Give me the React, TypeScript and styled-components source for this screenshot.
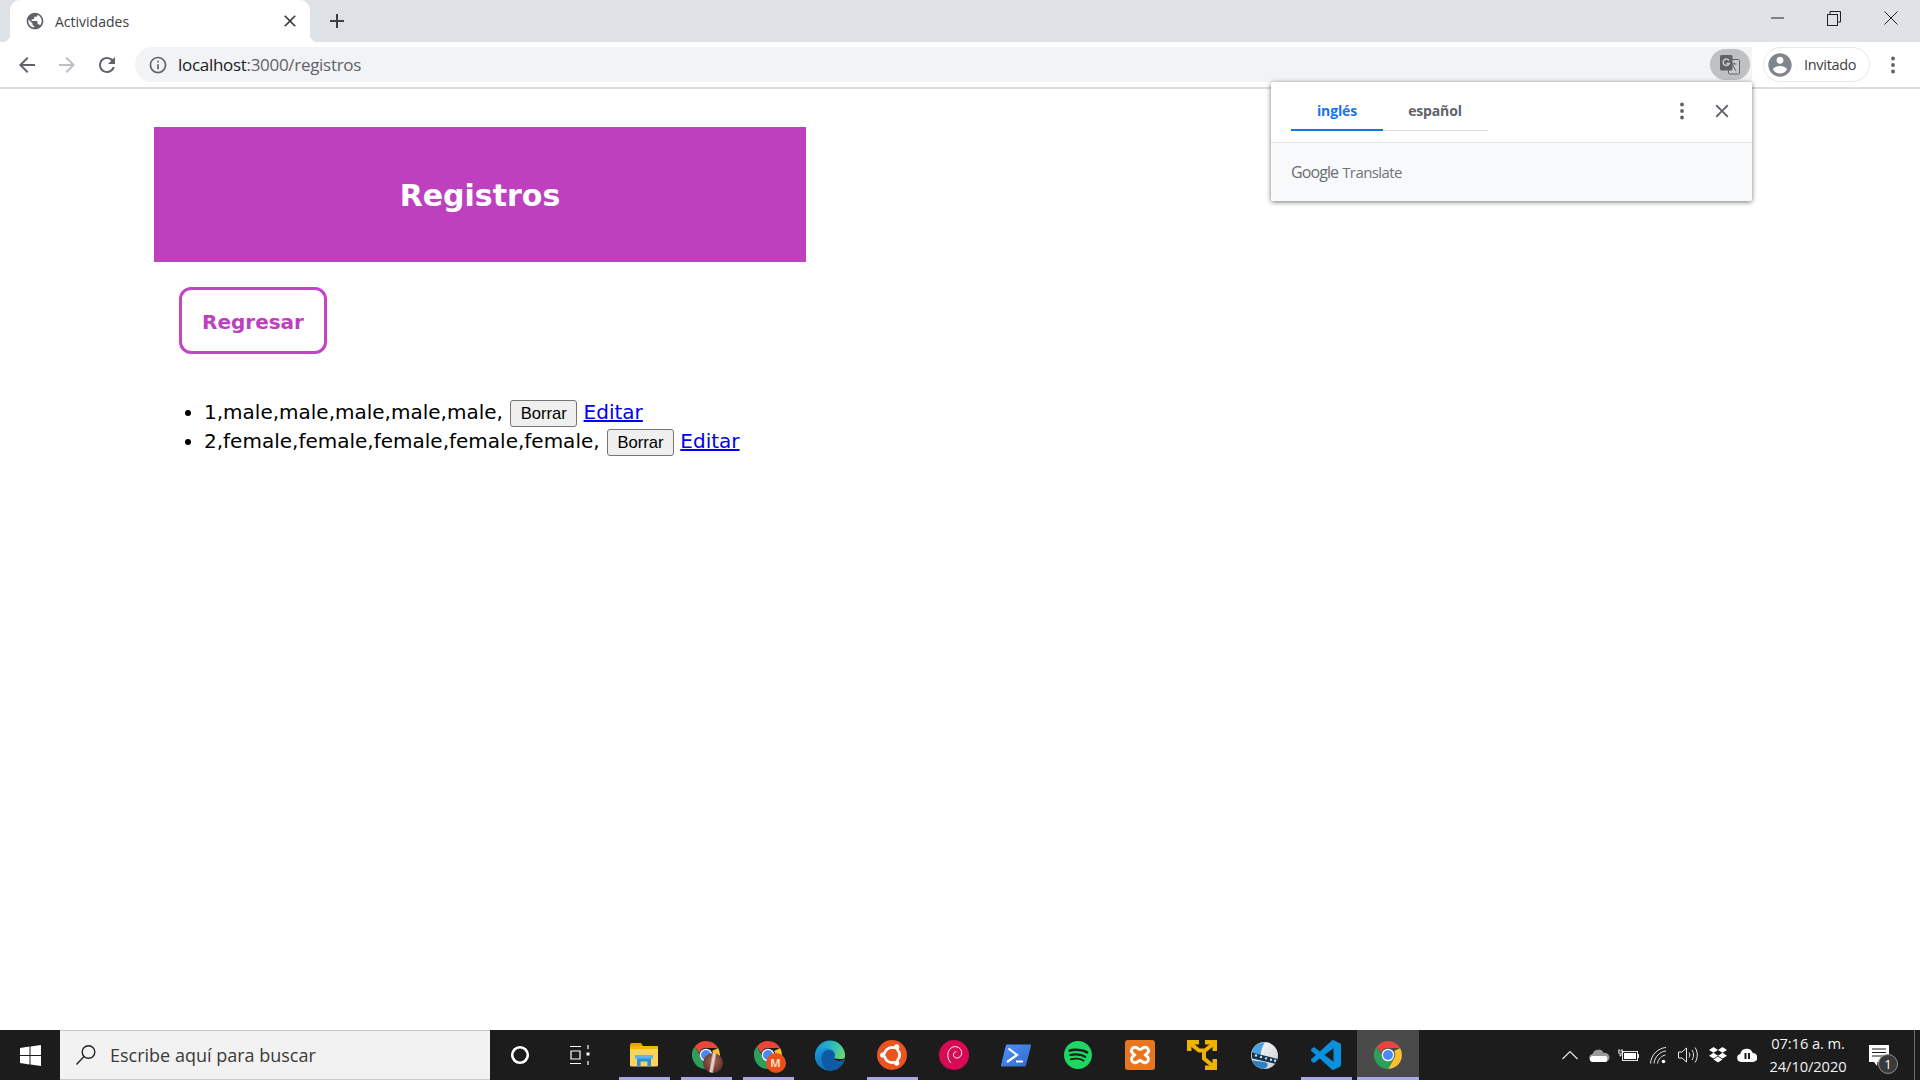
import React from "react";
import styled, { createGlobalStyle } from "styled-components";

const Global = createGlobalStyle`
  html, body { margin: 0; padding: 0; height: 100%; background: #fff; overflow: hidden; }
  #root { height: 100%; }
`;

const UI = `"Open Sans", "Noto Sans", sans-serif`;

const Screen = styled.div`
  position: relative;
  width: 1920px;
  height: 1080px;
  display: flex;
  flex-direction: column;
  font-family: "DejaVu Sans", sans-serif;
  overflow: hidden;
`;

/* ---------- browser chrome ---------- */
const TabStrip = styled.div`
  height: 42px;
  flex: none;
  background: #dee1e6;
  display: flex;
  padding-left: 10px;
`;
const Tab = styled.div`
  position: relative;
  width: 300px;
  height: 42px;
  box-sizing: border-box;
  background: #fff;
  border-radius: 10px 10px 0 0;
  display: flex;
  align-items: center;
  padding: 0 10px 0 15px;
  &::before, &::after {
    content: "";
    position: absolute;
    bottom: 0;
    width: 8px;
    height: 8px;
  }
  &::before { left: -8px; background: radial-gradient(circle at 0 0, #dee1e6 8px, #fff 8.5px); }
  &::after { right: -8px; background: radial-gradient(circle at 100% 0, #dee1e6 8px, #fff 8.5px); }
`;
const TabTitle = styled.span`
  flex: 1;
  margin-left: 10px;
  font: 400 14px ${UI};
  color: #3c4043;
  letter-spacing: 0;
`;
const NewTab = styled.div`
  width: 30px;
  margin-left: 12px;
  display: flex;
  align-items: center;
  justify-content: center;
`;
const WindowControls = styled.div`
  margin-left: auto;
  margin-right: 1px;
  display: flex;
  height: 36px;
`;
const WindowButton = styled.div`
  width: 56.5px;
  display: flex;
  align-items: center;
  justify-content: center;
`;
const Toolbar = styled.div`
  height: 47px;
  flex: none;
  box-sizing: border-box;
  background: #fff;
  border-bottom: 2px solid #dadce0;
  display: flex;
  align-items: flex-start;
  padding: 5px 0 0 7px;
`;
const NavButton = styled.div`
  width: 40px;
  height: 35px;
  display: flex;
  align-items: center;
  justify-content: center;
`;
const Omnibox = styled.div`
  flex: none;
  width: 1617px;
  height: 35px;
  margin-left: 8px;
  border-radius: 17.5px 0 0 17.5px;
  background: #f1f3f4;
  display: flex;
  align-items: center;
  padding-left: 13px;
  box-sizing: border-box;
`;
const Url = styled.div`
  margin-left: 10px;
  font: 400 17px ${UI};
  letter-spacing: -0.3px;
  color: #5f6368;
  b { font-weight: 400; color: #202124; }
`;
const TranslateChip = styled.div`
  margin-left: auto;
  margin-right: 2px;
  width: 40px;
  height: 31px;
  border-radius: 16px;
  background: #bfc0c1;
  display: flex;
  align-items: center;
  justify-content: center;
  flex: none;
`;
const ProfilePill = styled.div`
  margin-left: 11px;
  width: 107px;
  height: 35px;
  box-sizing: border-box;
  border: 1px solid #e6e7e9;
  border-radius: 18px;
  display: flex;
  align-items: center;
  padding-left: 2px;
  font: 400 14.5px ${UI};
  letter-spacing: -0.3px;
  color: #3c4043;
  span { margin-left: 10px; }
`;
const MenuButton = styled.div`
  width: 46px;
  height: 35px;
  display: flex;
  align-items: center;
  justify-content: center;
`;

/* ---------- translate bubble ---------- */
const Bubble = styled.div`
  position: absolute;
  left: 1271px;
  top: 82px;
  width: 481px;
  height: 119px;
  background: #fff;
  border-radius: 2px;
  box-shadow: 0 1px 5px rgba(0,0,0,.55);
  display: flex;
  flex-direction: column;
`;
const BubbleHead = styled.div`
  height: 61px;
  box-sizing: border-box;
  border-bottom: 1px solid #e4e5ea;
  display: flex;
  padding: 0 10px 0 20px;
`;
const Lang = styled.div<{ $on?: boolean }>`
  width: ${p => (p.$on ? 92 : 105)}px;
  height: 49px;
  box-sizing: border-box;
  padding-top: 19px;
  text-align: center;
  padding-right: ${p => (p.$on ? 0 : 1)}px;
  font: 700 14px ${UI};
  letter-spacing: -0.15px;
  color: ${p => (p.$on ? "#1a73e8" : "#5f6368")};
  border-bottom: ${p => (p.$on ? "2px solid #1a73e8" : "1px solid #dadce0")};
`;
const BubbleActions = styled.div`
  margin-left: auto;
  display: flex;
  height: 57px;
  align-items: center;
`;
const BubbleButton = styled.div`
  width: 40px;
  display: flex;
  justify-content: center;
`;
const BubbleFoot = styled.div`
  flex: 1;
  background: #f8f9fa;
  display: flex;
  align-items: center;
  padding-left: 20px;
  border-radius: 0 0 2px 2px;
  color: #70757a;
  font: 400 15px ${UI};
  letter-spacing: -0.6px;
  span { font-size: 16px; margin-right: 4px; color: #6b6f73; letter-spacing: -0.9px; }
`;

/* ---------- page ---------- */
const Page = styled.main`
  flex: 1;
  padding: 38px 0 0 154px;
  background: #fff;
  color: #000;
`;
const Banner = styled.header`
  width: 652px;
  height: 135px;
  box-sizing: border-box;
  padding-top: 2px;
  background: #bf40bf;
  display: flex;
  align-items: center;
  justify-content: center;
`;
const Title = styled.h1`
  margin: 0;
  color: #fff;
  font: 700 30px "DejaVu Sans", sans-serif;
`;
const BackButton = styled.a`
  display: flex;
  align-items: center;
  justify-content: center;
  box-sizing: border-box;
  width: 148px;
  height: 67px;
  margin: 25px 0 0 25px;
  padding-top: 2px;
  border: 3px solid #c445c4;
  border-radius: 12px;
  color: #bf40bf;
  font: 700 20px "DejaVu Sans", sans-serif;
`;
const List = styled.ul`
  margin: 44px 0 0;
  padding: 0 0 0 50px;
  font-size: 20px;
  line-height: 29.4px;
`;
const Row = styled.li`
  height: 29.4px;
`;
const DeleteButton = styled.button`
  box-sizing: border-box;
  width: 67px;
  height: 27px;
  margin: 0 0 0 1px;
  padding: 0;
  background: #efefef;
  border: 1px solid #767676;
  border-radius: 3px;
  font: 400 16.6px "Liberation Sans", sans-serif;
  color: #000;
  vertical-align: 0.5px;
`;
const EditLink = styled.a`
  color: #0000ee;
  text-decoration: underline;
  cursor: pointer;
`;

/* ---------- taskbar ---------- */
const Taskbar = styled.footer`
  height: 50px;
  flex: none;
  background: #1c1c1c;
  display: flex;
  align-items: stretch;
  color: #fff;
`;
const StartButton = styled.div`
  width: 60px;
  display: flex;
  align-items: center;
  justify-content: center;
`;
const SearchBox = styled.div`
  width: 430px;
  box-sizing: border-box;
  background: #f2f2f2;
  border: 1px solid #c8c8c8;
  border-width: 1px 0;
  display: flex;
  align-items: center;
  padding-left: 15px;
  font: 400 18px ${UI};
  color: #3a3a3a;
  span { margin-left: 13px; }
`;
const ShellButton = styled.div<{ $inset?: number }>`
  width: ${p => (p.$inset ? 63 : 60)}px;
  box-sizing: border-box;
  padding-right: ${p => p.$inset ?? 0}px;
  display: flex;
  align-items: center;
  justify-content: center;
`;
const AppSlot = styled.div<{ $open?: boolean; $active?: boolean }>`
  position: relative;
  width: 62px;
  display: flex;
  align-items: center;
  justify-content: center;
  background: ${p => (p.$active ? "#4a4a4a" : "transparent")};
  &::after {
    content: "";
    display: ${p => (p.$open ? "block" : "none")};
    position: absolute;
    bottom: 0;
    left: ${p => (p.$active ? 0 : 5.5)}px;
    right: ${p => (p.$active ? 0 : 5.5)}px;
    height: 3px;
    background: #aaa6e8;
  }
`;
const Tray = styled.div`
  margin-left: auto;
  display: flex;
  align-items: center;
`;
const TrayIcon = styled.div`
  width: 29.6px;
  display: flex;
  align-items: center;
  justify-content: center;
`;
const Clock = styled.div`
  width: 92px;
  text-align: center;
  font: 400 14.7px/23px ${UI};
  color: #f2f2f2;
  letter-spacing: -0.1px;
`;
const Notify = styled.div`
  position: relative;
  width: 60px;
  height: 100%;
  box-sizing: border-box;
  display: flex;
  align-items: flex-start;
  padding: 15px 0 0 15px;
`;
const NotifyBadge = styled.div`
  position: absolute;
  left: 24px;
  top: 24px;
  width: 20px;
  height: 20px;
  box-sizing: border-box;
  border: 1px solid #8c8c8c;
  border-radius: 50%;
  background: #3a3a3a;
  color: #fff;
  font: 400 13px/18px ${UI};
  text-align: center;
`;
const EdgeLine = styled.div`
  width: 1px;
  height: 100%;
  background: #6e6e6e;
  margin-right: 5px;
`;

/* ---------- icons ---------- */
const M = ({ d, size = 24, fill = "#5f6368" }: { d: string; size?: number; fill?: string }) => (
  <svg width={size} height={size} viewBox="0 0 24 24" fill={fill}><path d={d} /></svg>
);
const P = {
  globe: "M12 2C6.48 2 2 6.48 2 12s4.48 10 10 10 10-4.48 10-10S17.52 2 12 2zm-1 17.93c-3.95-.49-7-3.85-7-7.93 0-.62.08-1.21.21-1.79L9 15v1c0 1.1.9 2 2 2v1.93zm6.9-2.54c-.26-.81-1-1.39-1.9-1.39h-1v-3c0-.55-.45-1-1-1H8v-2h2c.55 0 1-.45 1-1V7h2c1.1 0 2-.9 2-2v-.41c2.93 1.19 5 4.06 5 7.41 0 2.08-.8 3.97-2.1 5.39z",
  close: "M19 6.41L17.59 5 12 10.59 6.41 5 5 6.41 10.59 12 5 17.59 6.41 19 12 13.41 17.59 19 19 17.59 13.41 12z",
  plus: "M19 13h-6v6h-2v-6H5v-2h6V5h2v6h6v2z",
  back: "M20 11H7.83l5.59-5.59L12 4l-8 8 8 8 1.41-1.41L7.83 13H20v-2z",
  forward: "M4 11h12.17l-5.59-5.59L12 4l8 8-8 8-1.41-1.41L16.17 13H4v-2z",
  reload: "M17.65 6.35C16.2 4.9 14.21 4 12 4c-4.42 0-7.99 3.58-7.99 8s3.57 8 7.99 8c3.73 0 6.84-2.55 7.73-6h-2.08c-.82 2.33-3.04 4-5.65 4-3.31 0-6-2.69-6-6s2.69-6 6-6c1.66 0 3.14.69 4.22 1.78L13 11h7V4l-2.35 2.35z",
  info: "M11 7h2v2h-2zm0 4h2v6h-2zm1-9C6.48 2 2 6.48 2 12s4.48 10 10 10 10-4.48 10-10S17.52 2 12 2zm0 18c-4.41 0-8-3.59-8-8s3.59-8 8-8 8 3.59 8 8-3.59 8-8 8z",
  account: "M12 2C6.48 2 2 6.48 2 12s4.48 10 10 10 10-4.48 10-10S17.52 2 12 2zm0 3c1.66 0 3 1.34 3 3s-1.34 3-3 3-3-1.34-3-3 1.34-3 3-3zm0 14.2c-2.5 0-4.71-1.28-6-3.22.03-1.99 4-3.08 6-3.08 1.99 0 5.97 1.09 6 3.08-1.29 1.94-3.5 3.22-6 3.22z",
};
const Dots = ({ fill = "#5f6368" }: { fill?: string }) => (
  <svg width="4" height="18" viewBox="0 0 4 18" fill={fill}>
    <circle cx="2" cy="2.5" r="1.9" /><circle cx="2" cy="9" r="1.9" /><circle cx="2" cy="15.5" r="1.9" />
  </svg>
);
const TranslateIcon = () => (
  <svg width="20" height="20" viewBox="0 0 20 20">
    <rect x="8.500" y="4.500" width="11" height="14.500" rx="1" fill="#c9cacb" stroke="#5f6368" strokeWidth="1" />
    <path d="M12 9l4 7M16.500 9h-5M14 7.500V9" stroke="#5f6368" strokeWidth="1" fill="none" />
    <rect x="0" y="0" width="12.500" height="15.500" rx="1.500" fill="#5f6368" />
    <path d="M9 5.500A3.200 3.200 0 1 0 9.300 8.500H6.500" stroke="#c9cacb" strokeWidth="1.500" fill="none" />
  </svg>
);
const WinMin = () => <svg width="13" height="2" viewBox="0 0 13 2"><path d="M0 1h13" stroke="#222" strokeWidth="1" /></svg>;
const WinRestore = () => (
  <svg width="14" height="15" viewBox="0 0 14 15" fill="none" stroke="#222" strokeWidth="1">
    <rect x=".5" y="3.5" width="10" height="11" /><path d="M3 3V.5h10.5V11H11" />
  </svg>
);
const WinClose = () => <svg width="14" height="14" viewBox="0 0 14 14"><path d="M.5.5l13 13M13.5.5l-13 13" stroke="#222" strokeWidth="1" /></svg>;

const WindowsLogo = () => (
  <svg width="21" height="21" viewBox="0 0 21 21" fill="#fff">
    <path d="M0 3l9.5-1.4V10H0zM10.5 1.4L21 0v10h-10.5zM0 11h9.5v8.4L0 18zM10.5 11H21v10l-10.5-1.5z" />
  </svg>
);
const SearchGlass = () => (
  <svg width="22" height="22" viewBox="0 0 22 22" fill="none" stroke="#222" strokeWidth="1.4">
    <circle cx="13.5" cy="8" r="6.3" /><path d="M9 12.5L1.5 20.5" />
  </svg>
);
const Cortana = () => (
  <svg width="20" height="20" viewBox="0 0 20 20"><circle cx="10" cy="10" r="7.8" fill="none" stroke="#fff" strokeWidth="2.6" /></svg>
);
const TaskView = () => (
  <svg width="21" height="20" viewBox="0 0 21 20" fill="none" stroke="#fff" strokeWidth="1.2">
    <path d="M1 1.5h11M1 18.5h11M2 6h9v8H2zM19 0v4M19 16v4" /><rect x="17.5" y="7.5" width="3" height="3" fill="#fff" stroke="none" />
  </svg>
);
const Explorer = () => (
  <svg width="28" height="24" viewBox="0 0 28 24">
    <path d="M0 2a2 2 0 0 1 2-2h9l2 3h-13z" fill="#e8a200" />
    <path d="M0 3h26a2 2 0 0 1 2 2v17a1.5 1.5 0 0 1-1.5 1.5H1.5A1.5 1.5 0 0 1 0 22z" fill="#fbd35d" />
    <path d="M0 3h28v3H0z" fill="#f5b800" />
    <path d="M7 15h14v8.5h-3.6V18.500h-6.800V23.500H7z" fill="#2f8fdc" />
    <path d="M5 12h18v3.500H5z" fill="#5fb5ee" />
  </svg>
);
const Chrome = ({ size = 28 }: { size?: number }) => (
  <svg width={size} height={size} viewBox="0 0 28 28">
    <path d="M14 0a14 14 0 0 1 12.1 7H14a7 7 0 0 0-6.800 5.300L2.800 5.600A14 14 0 0 1 14 0z" fill="#e8453c" />
    <path d="M26.100 7A14 14 0 0 1 14 28l6-10.500A7 7 0 0 0 20.100 10z" fill="#fbc02d" />
    <path d="M2.800 5.600l6.100 10.600A7 7 0 0 0 20 17.500L14 28A14 14 0 0 1 2.800 5.600z" fill="#2e9e5b" />
    <circle cx="14" cy="14" r="6.300" fill="#fff" />
    <circle cx="14" cy="14" r="5" fill="#4a89f3" />
  </svg>
);
const ChromeBadge = styled.div`
  position: relative;
  width: 31px;
  height: 28px;
  margin-left: 2px;
`;
const Avatar = styled.div`
  position: absolute;
  right: 0;
  bottom: -4px;
  width: 20px;
  height: 20px;
  border-radius: 50%;
  background:
    linear-gradient(100deg, transparent 38%, #e4cfc4 45%, #e4cfc4 52%, transparent 60%),
    radial-gradient(circle at 50% 40%, #9b6a58 0%, #6f3a32 60%, #55292a 100%);
`;
const MBadge = styled.div`
  position: absolute;
  right: -1px;
  bottom: -4px;
  width: 20px;
  height: 20px;
  border-radius: 50%;
  background: #e9501c;
  color: #ffd9c4;
  font: 700 11px/20px ${UI};
  text-align: center;
`;
const Edge = () => (
  <svg width="30" height="31" viewBox="0 0 30 31">
    <defs>
      <linearGradient id="eg1" x1="0" y1="0.2" x2="1" y2="0.6"><stop offset="0" stopColor="#1a8fd8" /><stop offset=".55" stopColor="#2fbfb8" /><stop offset="1" stopColor="#78dd5e" /></linearGradient>
      <linearGradient id="eg2" x1="0" y1="0" x2="0.5" y2="1"><stop offset="0" stopColor="#1a9ce0" /><stop offset="1" stopColor="#0e66b2" /></linearGradient>
    </defs>
    <circle cx="15" cy="15.500" r="15" fill="url(#eg1)" />
    <path d="M0 15.500C1 10.500 6 8 11 8c5 0 9 3 9 7 0 2-1 2.800-1 3.700 0 1.200 2.200 2.300 5 2.300 2 0 4.500-.6 5.500-2C28 26 22 31 15 30.500 6.500 30.500 0 24 0 15.500z" fill="url(#eg2)" />
    <path d="M6.500 18c0-4.500 3-8 7.500-8 3 0 5.800 2 6 5 0 1.800-1 2.800-1 3.700 0 1.200 2.200 2.300 5 2.300 2 0 4.500-.6 5.500-2C28 26 22 31 15 30.500 10 29.500 6.500 24 6.500 18z" fill="#0f5aa5" />
    <path d="M19 18.700c0 1.200 2.200 2.300 5 2.300 2 0 4.500-.6 5.600-2l.4-1.500c-1 1.500-3.500 1.800-5.500 1.500-2.500-.3-4.500-1-5.500-.3z" fill="#1c1c1c" />
  </svg>
);
const Ubuntu = () => (
  <svg width="30" height="30" viewBox="0 0 30 30">
    <circle cx="15" cy="15" r="15" fill="#e95420" />
    <circle cx="15" cy="15" r="7.600" fill="none" stroke="#fff" strokeWidth="2.800" />
    <path d="M15 15L5 15M15 15L20.500 5.500M15 15L20.500 24.500" stroke="#e95420" strokeWidth="2" />
    <circle cx="5.700" cy="15" r="2.600" fill="#fff" /><circle cx="19.700" cy="6.900" r="2.600" fill="#fff" /><circle cx="19.700" cy="23.100" r="2.600" fill="#fff" />
  </svg>
);
const Debian = () => (
  <svg width="30" height="30" viewBox="0 0 30 30">
    <circle cx="15" cy="15" r="15" fill="#d70a53" />
    <path d="M12 23C8 19 7.500 11.500 12 8c3.800-2.800 9.500-1 10.500 3.500.8 3.800-1.800 6.500-4.500 6.500-2.200 0-3.800-1.600-3.500-3.800.2-1.600 1.600-2.700 3-2.400" fill="none" stroke="#fff" strokeWidth="1" />
  </svg>
);
const PowerShell = () => (
  <svg width="30" height="23" viewBox="0 0 30 23">
    <defs><linearGradient id="ps" x1="0" y1="0" x2="1" y2="1"><stop offset="0" stopColor="#5391fe" /><stop offset="1" stopColor="#2e6ac4" /></linearGradient></defs>
    <path d="M6 .5h23a1 1 0 0 1 1 1.200L25 21.500a1.500 1.500 0 0 1-1.500 1H1a1 1 0 0 1-1-1.300L4.800 1.500A1.500 1.500 0 0 1 6 .5z" fill="url(#ps)" />
    <path d="M7.500 4.500L16 11l-10 7" fill="none" stroke="#fff" strokeWidth="2.200" />
    <path d="M15 17.500h7" stroke="#fff" strokeWidth="2" />
  </svg>
);
const Spotify = () => (
  <svg width="28" height="28" viewBox="0 0 24 24" fill="#1ed760">
    <path d="M12 0C5.400 0 0 5.400 0 12s5.400 12 12 12 12-5.400 12-12S18.660 0 12 0zm5.521 17.340c-.240.359-.660.480-1.021.240-2.820-1.740-6.360-2.101-10.561-1.141-.418.122-.779-.179-.899-.539-.120-.421.180-.780.540-.900 4.560-1.021 8.520-.600 11.640 1.320.420.180.479.659.301 1.020zm1.440-3.300c-.301.420-.841.600-1.262.300-3.239-1.980-8.159-2.580-11.939-1.380-.479.120-1.020-.120-1.140-.600-.120-.480.120-1.021.600-1.141C9.600 9.900 15 10.561 18.720 12.840c.361.181.540.780.241 1.200zm.120-3.360C15.240 8.400 8.820 8.160 5.160 9.301c-.600.179-1.200-.181-1.380-.721-.180-.601.180-1.200.720-1.381 4.260-1.260 11.280-1.020 15.721 1.621.539.300.719 1.020.419 1.560-.299.421-1.020.599-1.559.300z" />
  </svg>
);
const Xampp = () => (
  <svg width="30" height="30" viewBox="0 0 30 30">
    <rect width="30" height="30" rx="3" fill="#e8761f" />
    <path d="M11 7.500c-3.500-.8-5.500 2.500-4 5L9.500 15 7 17.500c-1.500 2.500.5 5.800 4 5 2-.5 2.500-2 4-2s2 1.500 4 2c3.500.8 5.500-2.500 4-5L20.500 15 23 12.500c1.500-2.500-.5-5.800-4-5-2 .5-2.500 2-4 2s-2-1.500-4-2z" fill="none" stroke="#fff" strokeWidth="3" />
  </svg>
);
const VmArrows = () => (
  <svg width="30" height="30" viewBox="0 0 30 30" fill="none" stroke="#eeb200" strokeWidth="4.500">
    <path d="M2.200 11V2.200H12" />
    <path d="M27.800 11V2.200H18" />
    <path d="M27.800 19v8.800H18" />
    <path d="M4 4l8 6.500h6L26 4" strokeWidth="4" />
    <path d="M17 11v7.500L26 26" strokeWidth="4" />
  </svg>
);
const Sphere = () => (
  <svg width="27" height="27" viewBox="0 0 27 27">
    <defs><linearGradient id="sph" x1="0" y1="0" x2="1" y2="1"><stop offset="0" stopColor="#ffffff" /><stop offset="1" stopColor="#c8ccd2" /></linearGradient></defs>
    <circle cx="13.500" cy="13.500" r="13.500" fill="url(#sph)" />
    <path d="M14 .2C7 0 1 5 .8 12c3 1 7 1.500 9 .5 0-4 2-9 4.200-12.300z" fill="#4aa3e0" />
    <path d="M12 27c-5-1-10-5-11-9 6 2 12 1 15 3 1.500 2 0 5-4 6z" fill="#2b7fc4" />
    <path d="M.6 10.500l26 6.500-1.200 5L1 16.500z" fill="#14344f" />
    <g fill="#cfd6dc"><circle cx="5" cy="13.500" r="1.200" /><circle cx="10" cy="15" r="1.200" /><circle cx="15" cy="16.400" r="1.200" /><circle cx="20" cy="17.800" r="1.200" /><circle cx="24" cy="18.800" r="1.200" /></g>
  </svg>
);
const VSCode = () => (
  <svg width="30" height="30" viewBox="0 0 24 24" fill="#0a90dc">
    <path d="M23.150 2.587L18.210.210a1.494 1.494 0 0 0-1.705.290l-9.460 8.630-4.120-3.128a.999.999 0 0 0-1.276.057L.327 7.261A1 1 0 0 0 .326 8.740L3.899 12 .326 15.260a1 1 0 0 0 .001 1.479L1.650 17.940a.999.999 0 0 0 1.276.057l4.120-3.128 9.460 8.630a1.492 1.492 0 0 0 1.704.290l4.942-2.377A1.500 1.500 0 0 0 24 20.060V3.939a1.500 1.500 0 0 0-.850-1.352zm-5.146 14.861L10.826 12l7.178-5.448v10.896z" />
  </svg>
);
const Chevron = () => <svg width="16" height="10" viewBox="0 0 16 10"><path d="M.5 9L8 1.500 15.500 9" fill="none" stroke="#e8e8e8" strokeWidth="1.200" /></svg>;
const OneDrive = () => (
  <svg width="21" height="13" viewBox="0 0 21 13">
    <path d="M4 13a4 4 0 0 1-.5-7.900A6 6 0 0 1 14.700 4a4.500 4.500 0 0 1 2.300 9z" fill="#9a9a9a" />
    <path d="M4 13a3 3 0 0 1 0-6h13a4 4 0 0 1 0 6z" fill="#fff" />
  </svg>
);
const Battery = () => (
  <svg width="21" height="14" viewBox="0 0 21 14" fill="none">
    <rect x="4.500" y="3.500" width="15" height="9" stroke="#e8e8e8" /><rect x="6" y="5" width="12" height="6" fill="#fff" />
    <rect x="20" y="6" width="1" height="4" fill="#e8e8e8" />
    <path d="M1 1v2M4 1v2M0 3h5v2H3v3H2V5H0z" stroke="#fff" strokeWidth=".8" />
  </svg>
);
const Wifi = () => (
  <svg width="17" height="17" viewBox="0 0 17 17" fill="none" stroke="#e8e8e8" strokeWidth="1">
    <path d="M.5 16.500C1 8 8 1 16 .5M4 16.500C4.500 10 10 4.500 16 4M7.500 16.500C8 12 12 8.500 15.500 8" />
    <circle cx="13.500" cy="14.500" r="1.800" fill="#fff" stroke="none" />
  </svg>
);
const Speaker = () => (
  <svg width="21" height="16" viewBox="0 0 21 16" fill="none" stroke="#e8e8e8" strokeWidth="1">
    <path d="M.5 5h3.500L8.500 1v14L4 11H.5zM11 5.500c1 1.500 1 3.500 0 5M14 3c2 3 2 7 0 10M17 .500c3 4 3 11 0 15" />
  </svg>
);
const Dropbox = () => (
  <svg width="18" height="16" viewBox="0 0 18 16" fill="#fff">
    <path d="M4.500 0L9 2.900 4.500 5.800 0 2.900zM13.500 0L18 2.900l-4.500 2.900L9 2.900zM0 8.700l4.500-2.900L9 8.700l-4.500 2.900zM13.500 5.800L18 8.700l-4.500 2.900L9 8.700zM4.500 12.500L9 9.600l4.500 2.900L9 15.400z" />
  </svg>
);
const CloudPause = () => (
  <svg width="20" height="14" viewBox="0 0 20 14">
    <path d="M4 14a4 4 0 0 1-.7-7.900A6.500 6.500 0 0 1 15.800 5 4.500 4.500 0 0 1 16 14z" fill="#fff" />
    <rect x="7.500" y="5" width="2" height="6" fill="#1c1c1c" /><rect x="11" y="5" width="2" height="6" fill="#1c1c1c" />
  </svg>
);
const NotifyIcon = () => (
  <svg width="20" height="22" viewBox="0 0 20 22">
    <path d="M0 0h20v17H8.500l-.5 4-3-4H0z" fill="#fff" />
    <path d="M3 4h14M3 7.500h14M3 11h14" stroke="#1c1c1c" strokeWidth="1" />
  </svg>
);

export default function App() {
  return (
    <Screen>
      <Global />
      <TabStrip>
        <Tab>
          <M d={P.globe} size={20} />
          <TabTitle>Actividades</TabTitle>
          <M d={P.close} size={20} fill="#3c4043" />
        </Tab>
        <NewTab><M d={P.plus} size={24} fill="#3c4043" /></NewTab>
        <WindowControls>
          <WindowButton><WinMin /></WindowButton>
          <WindowButton><WinRestore /></WindowButton>
          <WindowButton><WinClose /></WindowButton>
        </WindowControls>
      </TabStrip>
      <Toolbar>
        <NavButton><M d={P.back} /></NavButton>
        <NavButton><M d={P.forward} fill="#bdc1c6" /></NavButton>
        <NavButton><M d={P.reload} /></NavButton>
        <Omnibox>
          <M d={P.info} size={20} />
          <Url><b>localhost</b>:3000/registros</Url>
          <TranslateChip><TranslateIcon /></TranslateChip>
        </Omnibox>
        <ProfilePill>
          <M d={P.account} size={28} fill="#80868b" />
          <span>Invitado</span>
        </ProfilePill>
        <MenuButton><Dots /></MenuButton>
      </Toolbar>

      <Page>
        <Banner><Title>Registros</Title></Banner>
        <BackButton>Regresar</BackButton>
        <List>
          <Row>1,male,male,male,male,male, <DeleteButton>Borrar</DeleteButton> <EditLink>Editar</EditLink></Row>
          <Row>2,female,female,female,female,female, <DeleteButton>Borrar</DeleteButton> <EditLink>Editar</EditLink></Row>
        </List>
      </Page>

      <Bubble>
        <BubbleHead>
          <Lang $on>inglés</Lang>
          <Lang>español</Lang>
          <BubbleActions>
            <BubbleButton><Dots /></BubbleButton>
            <BubbleButton><M d={P.close} size={22} /></BubbleButton>
          </BubbleActions>
        </BubbleHead>
        <BubbleFoot><span>Google</span>Translate</BubbleFoot>
      </Bubble>

      <Taskbar>
        <StartButton><WindowsLogo /></StartButton>
        <SearchBox><SearchGlass /><span>Escribe aquí para buscar</span></SearchBox>
        <ShellButton><Cortana /></ShellButton>
        <ShellButton $inset={4}><TaskView /></ShellButton>
        <AppSlot $open><Explorer /></AppSlot>
        <AppSlot $open>
          <ChromeBadge><Chrome /><Avatar /></ChromeBadge>
        </AppSlot>
        <AppSlot $open>
          <ChromeBadge><Chrome /><MBadge>M</MBadge></ChromeBadge>
        </AppSlot>
        <AppSlot><Edge /></AppSlot>
        <AppSlot $open><Ubuntu /></AppSlot>
        <AppSlot><Debian /></AppSlot>
        <AppSlot><PowerShell /></AppSlot>
        <AppSlot><Spotify /></AppSlot>
        <AppSlot><Xampp /></AppSlot>
        <AppSlot><VmArrows /></AppSlot>
        <AppSlot><Sphere /></AppSlot>
        <AppSlot $open><VSCode /></AppSlot>
        <AppSlot $open $active><Chrome /></AppSlot>
        <Tray>
          <TrayIcon><Chevron /></TrayIcon>
          <TrayIcon><OneDrive /></TrayIcon>
          <TrayIcon><Battery /></TrayIcon>
          <TrayIcon><Wifi /></TrayIcon>
          <TrayIcon><Speaker /></TrayIcon>
          <TrayIcon><Dropbox /></TrayIcon>
          <TrayIcon><CloudPause /></TrayIcon>
          <Clock>07:16 a. m.<br />24/10/2020</Clock>
          <Notify><NotifyIcon /><NotifyBadge>1</NotifyBadge></Notify>
          <EdgeLine />
        </Tray>
      </Taskbar>
    </Screen>
  );
}
